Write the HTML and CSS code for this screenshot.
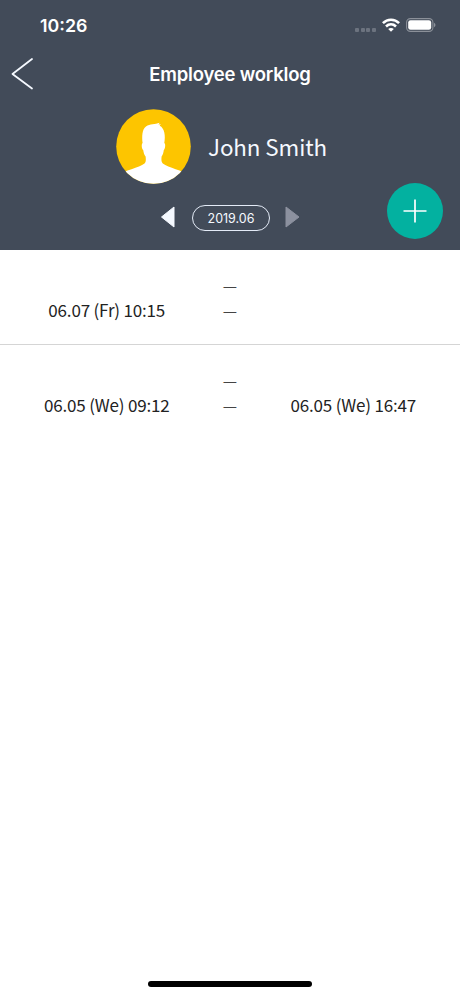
FILE: index.html
```html
<!DOCTYPE html>
<html lang="en">
<head>
    <meta charset="UTF-8">
    <meta name="viewport" content="width=device-width, initial-scale=1.0">
    <title>Employee worklog</title>
    <link rel="stylesheet" href="styles.css">
</head>
<body>
    <div class="screen">
        <header class="header">
            <div class="status-bar">
                <span class="clock">10:26</span>
                <div class="status-icons">
                    <div class="signal"><i></i><i></i><i></i><i></i></div>
                    <svg class="wifi" width="18" height="14" viewBox="0 0 18 14" fill="none" stroke="#fff" stroke-width="2.6">
                        <path d="M.9 5.200C5.400 .6 12.600 .6 17.100 5.200"/>
                        <path d="M4 8.500C6.900 5.700 11.100 5.700 14 8.500"/>
                        <path d="M9 13.800L6.200 11C7.800 9.500 10.200 9.500 11.800 11Z" fill="#fff" stroke="none"/>
                    </svg>
                    <svg class="battery" width="30" height="14" viewBox="0 0 30 14">
                        <rect x=".6" y=".6" width="26.300" height="12.800" rx="3.800" fill="none" stroke="#8b9099" stroke-width="1.100"/>
                        <rect x="2.200" y="2.200" width="23" height="9.600" rx="2.300" fill="#fff"/>
                        <path d="M28 4.800C30 5.600 30 8.400 28 9.200Z" fill="#8b9099"/>
                    </svg>
                </div>
            </div>
            <nav class="nav">
                <a href="#" class="back" aria-label="Back">
                    <svg width="24" height="34" viewBox="0 0 24 34" fill="none" stroke="#f5f9ff" stroke-width="1.800" stroke-linecap="round" stroke-linejoin="round">
                        <path d="M21 2L1.500 17L21 31.500"/>
                    </svg>
                </a>
                <h1 class="title">Employee worklog</h1>
            </nav>
            <div class="profile">
                <svg class="avatar" width="75" height="75" viewBox="0 0 75 75">
                    <clipPath id="avatar-clip"><circle cx="37.500" cy="37.500" r="37.300"/></clipPath>
                    <g clip-path="url(#avatar-clip)">
                        <rect width="75" height="75" fill="#fdc500"/>
                        <path d="M0 68C9 60.500 23 59 28.500 54.500C30.300 53 29.800 49.500 29.600 47.500C28 45.500 27.500 43 27.200 41C25.500 40 25.300 34.500 26.600 34C25.800 28 26 20 30 17.500C34 14.800 39 15.800 43.600 13.800L42.500 15.700L44.800 15L43.700 16.800C48.500 19 49.700 27 48.300 34C49.800 34.500 49.300 40 47.800 41C47.500 43.500 47 45.500 45.600 47.500C45.400 49.500 45 53 46.800 54.500C52.500 59 66 60.500 75 68V75H0Z" fill="#fff"/>
                    </g>
                </svg>
                <span class="name">John Smith</span>
            </div>
            <div class="month-picker">
                <svg width="15" height="22" viewBox="0 0 15 22"><path d="M1.500 11L14 1V21Z" fill="#f5f9ff" stroke="#f5f9ff" stroke-linejoin="round"/></svg>
                <span class="month">2019.06</span>
                <svg width="15" height="22" viewBox="0 0 15 22"><path d="M14 11L1 1V21Z" fill="#8c919f" stroke="#8c919f" stroke-linejoin="round"/></svg>
            </div>
            <button class="add-btn" aria-label="Add">
                <svg width="24" height="24" viewBox="0 0 24 24" stroke="#fff" stroke-width="1.700"><path d="M12 .5V23.500M.5 12H23.500"/></svg>
            </button>
        </header>
        <main class="worklog">
            <div class="log-row">
                <div class="log-time">06.07 (Fr) 10:15</div>
                <div class="dashes"><span>—</span><span>—</span></div>
                <div class="log-time"></div>
            </div>
            <div class="log-row">
                <div class="log-time">06.05 (We) 09:12</div>
                <div class="dashes"><span>—</span><span>—</span></div>
                <div class="log-time">06.05 (We) 16:47</div>
            </div>
        </main>
        <div class="home-indicator"></div>
    </div>
</body>
</html>
```

FILE: styles.css
```css
* {
    box-sizing: border-box;
}
body {
    margin: 0;
    background: #fff;
    font-family: 'Noto Sans CJK KR', 'Noto Sans', sans-serif;
}
.screen {
    width: 460px;
    height: 996px;
    display: flex;
    flex-direction: column;
    align-items: center;
    overflow: hidden;
}
.header {
    position: relative;
    width: 100%;
    height: 250px;
    background: #424b59;
    color: #fff;
}
.status-bar {
    display: flex;
    justify-content: space-between;
    align-items: center;
    height: 51px;
    padding: 0 24px 0 40px;
    font-family: Inter, sans-serif;
}
.clock {
    font-size: 17.8px;
    font-weight: 600;
}
.status-icons {
    display: flex;
    align-items: center;
    margin-top: -1px;
}
.signal {
    display: flex;
    gap: 1.6px;
    margin: 9px 6px 0 0;
}
.signal i {
    width: 4px;
    height: 4px;
    border-radius: 1px;
    background: #6c737f;
}
.battery {
    margin-left: 6px;
}
.nav {
    display: grid;
    grid-template-columns: 40px 1fr 40px;
    align-items: center;
    height: 46px;
}
.back {
    display: flex;
    padding-left: 11px;
}
.title {
    margin: 0;
    text-align: center;
    font-family: Inter, sans-serif;
    font-size: 18.5px;
    font-weight: 600;
    letter-spacing: -0.2px;
}
.profile {
    display: flex;
    align-items: center;
    gap: 17px;
    padding: 12px 0 0 116px;
}
.name {
    margin-top: -1px;
    font-size: 22.4px;
    line-height: 36px;
    letter-spacing: -0.1px;
    color: #f5f9ff;
}
.month-picker {
    display: flex;
    align-items: center;
    gap: 16px;
    height: 26px;
    margin-top: 20px;
    padding-left: 160px;
}
.month {
    width: 78px;
    height: 26px;
    margin: 2px 0 0 1px;
    border: 1.5px solid #e4ebf7;
    border-radius: 13px;
    font-family: Inter, sans-serif;
    font-size: 12.5px;
    line-height: 25px;
    text-align: center;
    color: #f5f9ff;
}
.month + svg {
    margin-left: -1px;
}
/* floats over the lower right of the header */
.add-btn {
    position: absolute;
    right: 17px;
    bottom: 11px;
    display: flex;
    align-items: center;
    justify-content: center;
    width: 56px;
    height: 56px;
    padding: 0;
    border: none;
    border-radius: 50%;
    background: #03b1a0;
}
.worklog {
    width: 100%;
    flex: 1;
}
.log-row {
    display: grid;
    grid-template-columns: 1fr 33px 1fr;
    height: 94.5px;
    padding-top: 23px;
    color: #222;
}
.log-row:first-child {
    height: 95px;
    border-bottom: 1px solid #d5d5d5;
}
.log-time {
    padding-top: 24px;
    font-size: 17px;
    line-height: 25px;
    letter-spacing: -0.18px;
    text-align: center;
}
.dashes {
    display: flex;
    flex-direction: column;
    align-items: center;
    font-size: 16px;
    line-height: 24.7px;
    color: #444;
}
.home-indicator {
    width: 164px;
    height: 6px;
    margin-bottom: 9px;
    border-radius: 3px;
    background: #000;
}
```
